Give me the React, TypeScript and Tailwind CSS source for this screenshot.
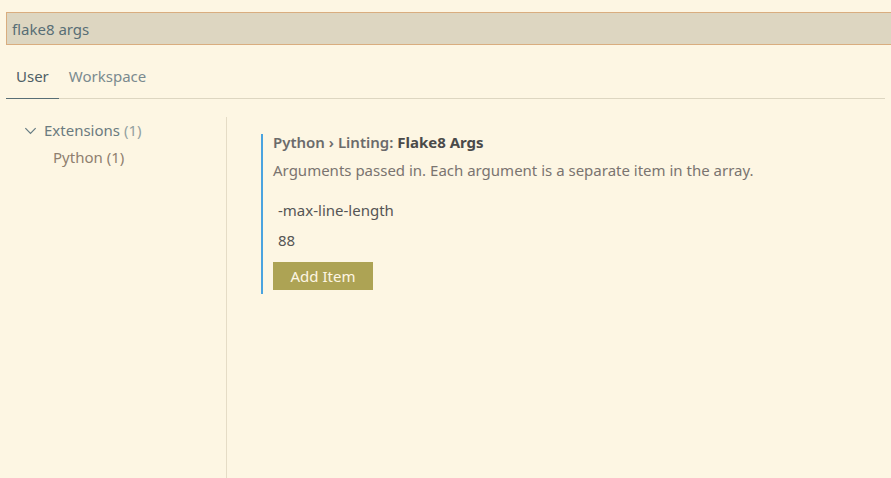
import React from 'react';

const font = { fontFamily: '"Noto Sans", "Open Sans", sans-serif' };

const App: React.FC = () => {
  return (
    <div className="w-[891px] h-[478px] bg-[#fdf6e3] overflow-hidden text-[15px] leading-[20px] text-[#657b83] flex flex-col" style={font}>
      {/* search */}
      <div className="pt-[12px] pl-[6px]">
        <div className="h-[33px] bg-[#ddd6c1] border border-[#d9ad7f] border-r-0 flex items-center pl-[5px] text-[15px] text-[#586e75]">
          flake8 args
        </div>
      </div>

      {/* tabs */}
      <div className="mx-[6px] mt-[11px] flex border-b border-[#ddd6c1] h-[43px]">
        <div className="px-[10px] pb-[2px] flex items-center border-b border-[#586e75] -mb-px text-[#4f5f66]">User</div>
        <div className="px-[10px] pb-[2px] flex items-center text-[#7a8a8f]">Workspace</div>
      </div>

      <div className="flex flex-1 mt-[18px]">
        {/* tree */}
        <div className="w-[221px] ml-[6px] border-r border-[#e5dcc6]">
          <div className="flex items-center h-[26px] pl-[17px] gap-[6px]">
            <svg width="15" height="15" viewBox="0 0 16 16" fill="none" stroke="#657b83" strokeWidth="1.3">
              <path d="M2.5 5.5l5.5 5.5 5.5-5.5" />
            </svg>
            <span className="text-[#6b7b80]">Extensions <span className="text-[#93a1a1]">(1)</span></span>
          </div>
          <div className="flex items-center h-[28px] pl-[47px] text-[#8f7f6f]">
            Python (1)
          </div>
        </div>

        {/* setting */}
        <div className="flex-1 pl-[34px] pt-[17px]">
          <div className="border-l-2 border-[#4aa3df] pl-[10px] pb-[4px]">
            <div className="font-semibold text-[#6b6b6b] h-[16px] flex items-center">
              Python › Linting:&nbsp;<span className="font-bold text-[#4a4a4a]">Flake8 Args</span>
            </div>
            <div className="mt-[10px] text-[#7a7470]">
              Arguments passed in. Each argument is a separate item in the array.
            </div>
            <div className="mt-[20px] pl-[5px] text-[#555555]">-max-line-length</div>
            <div className="mt-[10px] pl-[5px] text-[#555555]">88</div>
            <button className="mt-[12px] w-[100px] h-[28px] bg-[#ada354] text-[#fdf6e3]" style={font}>
              Add Item
            </button>
          </div>
        </div>
      </div>
    </div>
  );
};

export default App;
